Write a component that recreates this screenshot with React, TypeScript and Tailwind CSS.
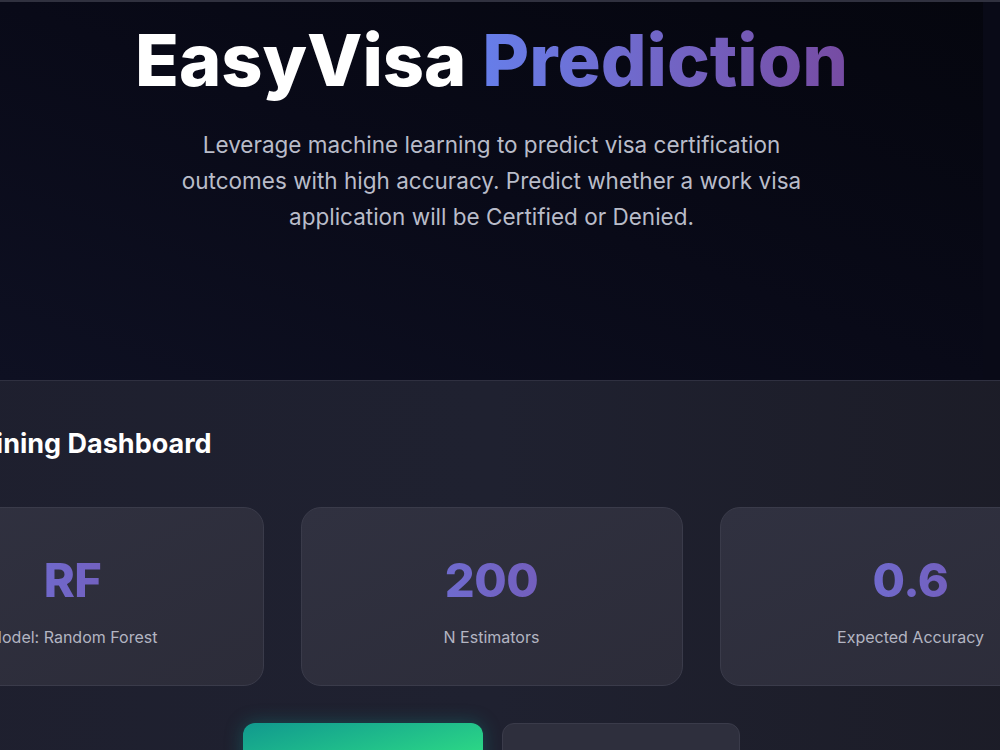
import React from "react";

const stats = [
  { value: "RF", label: "Model: Random Forest" },
  { value: "200", label: "N Estimators" },
  { value: "0.6", label: "Expected Accuracy" },
];

function StatCard({ value, label }: { value: string; label: string }) {
  return (
    <div className="h-[179px] rounded-[20px] border border-[#3a3b4a] bg-gradient-to-br from-[#303140] to-[#2c2c39] pt-[44px] flex flex-col items-center">
      <div className="w-full text-center text-[47px] leading-[1.2] font-extrabold tracking-[-0.01em] bg-gradient-to-r from-[#667eea] to-[#764ba2] bg-clip-text text-transparent">
        {value}
      </div>
      <div className="mt-[18px] text-[16px] leading-[22px] text-[#b3b5c2]">{label}</div>
    </div>
  );
}

export default function App() {
  return (
    <div
      className="w-[1000px] h-[750px] overflow-hidden bg-[#090a17]"
      style={{ fontFamily: "Inter, 'Noto Sans', sans-serif" }}
    >
      <div className="h-[2px] bg-[#30313f]" />
      <div className="w-[983px] flex flex-col items-center">
        {/* Hero */}
        <header className="w-full h-[378px] bg-gradient-to-bl from-[#05060e] via-[#090a18] to-[#0e1022] flex flex-col items-center pt-[22px]">
          <h1 className="text-[72px] leading-none font-extrabold tracking-[0em] text-white whitespace-nowrap">
            EasyVisa{" "}
            <span className="bg-gradient-to-r from-[#667eea] to-[#764ba2] bg-clip-text text-transparent">
              Prediction
            </span>
          </h1>
          <p className="mt-[31px] max-w-[640px] text-center text-[22.5px] leading-[36px] text-[#b9bcc9]">
            Leverage machine learning to predict visa certification outcomes with high accuracy. Predict
            whether a work visa application will be Certified or Denied.
          </p>
        </header>

        {/* Training dashboard */}
        <section className="shrink-0 w-[1334px] border-t border-[#2f3040] bg-gradient-to-r from-[#1e1f2e] via-[#1f2130] to-[#1b1b25] px-[40px] pt-[45px] pb-[60px]">
          <h2 className="text-[27px] leading-[1.3] font-bold text-white">Model Training Dashboard</h2>
          <div className="mt-[46px] grid grid-cols-[382px_382px_382px] gap-[37px] justify-center">
            {stats.map((s) => (
              <StatCard key={s.label} value={s.value} label={s.label} />
            ))}
          </div>
          <div className="mt-[37px] flex justify-center gap-[19px]">
            <button className="w-[240px] h-[64px] rounded-[12px] bg-gradient-to-br from-[#11998e] to-[#38ef7d] shadow-[0_0_18px_rgba(17,153,142,0.35)] text-white font-semibold text-[16px] pt-[52px]">
              Train Model
            </button>
            <button className="w-[238px] h-[64px] rounded-[12px] border border-[#3a3b4a] bg-[#2e2f3d] text-[#d0d2dc] font-semibold text-[16px] pt-[52px]">
              Reset
            </button>
          </div>
        </section>
      </div>
    </div>
  );
}
